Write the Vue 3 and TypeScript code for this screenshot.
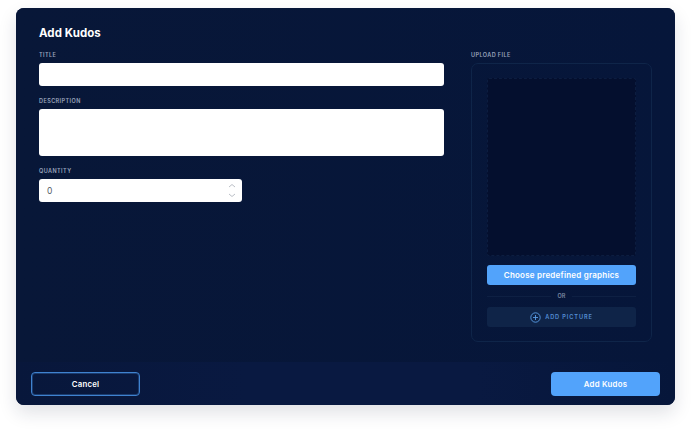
<script setup lang="ts">
const title = 'Add Kudos'
</script>

<template>
  <div class="page">
    <section class="modal">
      <div class="body">
        <h1 class="heading">{{ title }}</h1>
        <div class="columns">
          <div class="form">
            <div class="field">
              <span class="label">TITLE</span>
              <div class="input title-input"></div>
            </div>
            <div class="field">
              <span class="label">DESCRIPTION</span>
              <div class="input desc-input"></div>
            </div>
            <div class="field">
              <span class="label">QUANTITY</span>
              <div class="input qty-input">
                <span class="qty-value">0</span>
                <svg class="stepper" width="8" height="15" viewBox="0 0 8 15" fill="none" stroke="#a9aeb8" stroke-width="0.8">
                  <path d="M1 4 L4 1.5 L7 4" />
                  <path d="M1 11 L4 13.5 L7 11" />
                </svg>
              </div>
            </div>
          </div>
          <div class="upload">
            <span class="label">UPLOAD FILE</span>
            <div class="panel">
              <div class="drop"></div>
              <button class="choose">Choose predefined graphics</button>
              <div class="or"><i></i><span>OR</span><i></i></div>
              <button class="add-pic">
                <svg width="11" height="11" viewBox="0 0 11 11" fill="none" stroke="#5a9ee8" stroke-width="0.9">
                  <circle cx="5.5" cy="5.5" r="4.7" />
                  <path d="M5.5 3 V8 M3 5.5 H8" />
                </svg>
                ADD PICTURE
              </button>
            </div>
          </div>
        </div>
      </div>
      <footer class="footer">
        <button class="btn cancel">Cancel</button>
        <button class="btn primary">Add Kudos</button>
      </footer>
    </section>
  </div>
</template>

<style>
html, body { margin: 0; background: #fff; }
</style>

<style scoped>
.page {
  width: 691px;
  height: 430px;
  padding: 8px 16px 25px;
  box-sizing: border-box;
  font-family: Inter, "Open Sans", sans-serif;
  overflow: hidden;
}
.modal {
  height: 397px;
  border-radius: 8px;
  background: #081738;
  box-shadow: 0 8px 18px rgba(20, 30, 60, 0.13);
  display: flex;
  flex-direction: column;
  overflow: hidden;
}
.body {
  height: 354px;
  box-sizing: border-box;
  padding: 18px 23px 0;
  background: linear-gradient(90deg, #081738 0%, #06163a 100%);
}
.heading {
  margin: 0 0 10px;
  color: #fff;
  font-size: 11.5px;
  line-height: 15px;
  font-weight: 700;
  letter-spacing: 0.05px;
}
.columns { display: flex; justify-content: space-between; }
.form { width: 405px; display: flex; flex-direction: column; gap: 11px; }
.field { display: flex; flex-direction: column; }
.label {
  color: #9aa5bd;
  font-size: 5.5px;
  line-height: 9px;
  font-weight: 600;
  letter-spacing: 0.42px;
  height: 12px;
}
.input { background: #fff; border-radius: 3px; height: 23px; box-sizing: border-box; }
.desc-input { height: 47px; }
.qty-input {
  width: 203px;
  display: flex;
  align-items: center;
  justify-content: space-between;
  padding: 0 6px 0 8px;
}
.qty-value { font-size: 8.5px; color: #555c68; }
.upload { width: 181px; display: flex; flex-direction: column; }
.panel {
  height: 279px;
  box-sizing: border-box;
  border: 1px solid #0f2549;
  border-radius: 7px;
  padding: 14px 15px 0;
  display: flex;
  flex-direction: column;
  align-items: stretch;
}
.drop {
  height: 178px;
  box-sizing: border-box;
  background: #040f2e;
  border: 1px dashed #0c1d40;
  border-radius: 2px;
  margin-bottom: 9px;
}
button { font-family: inherit; border: 0; padding: 0; }
.choose {
  height: 20px;
  border-radius: 3px;
  background: #52a3fb;
  color: #fff;
  font-size: 8px;
  font-weight: 600;
  letter-spacing: 0.22px;
}
.or {
  height: 22px;
  display: flex;
  align-items: center;
  gap: 7px;
  color: #7c89a3;
  font-size: 5.5px;
  font-weight: 600;
}
.or i { flex: 1; height: 1px; background: #0e2043; }
.add-pic {
  height: 20px;
  border-radius: 3px;
  background: #0f2448;
  color: #5590d6;
  font-size: 5.6px;
  font-weight: 600;
  letter-spacing: 0.9px;
  display: flex;
  align-items: center;
  justify-content: center;
  gap: 4px;
}
.footer {
  flex: 1;
  display: flex;
  justify-content: space-between;
  align-items: flex-start;
  padding: 10px 15px 0;
  background: linear-gradient(90deg, #08173b 0%, #091941 35%, #091941 70%, #06163a 100%);
}
.btn {
  width: 109px;
  height: 24px;
  box-sizing: border-box;
  border-radius: 4px;
  color: #fff;
  font-size: 7.8px;
  font-weight: 600;
  letter-spacing: 0.25px;
}
.cancel {
  background: transparent;
  border: 1px solid #3f82cf;
  box-shadow: inset 0 0 0 1px rgba(63, 130, 207, 0.35);
}
.primary { background: #52a3fb; }
</style>
